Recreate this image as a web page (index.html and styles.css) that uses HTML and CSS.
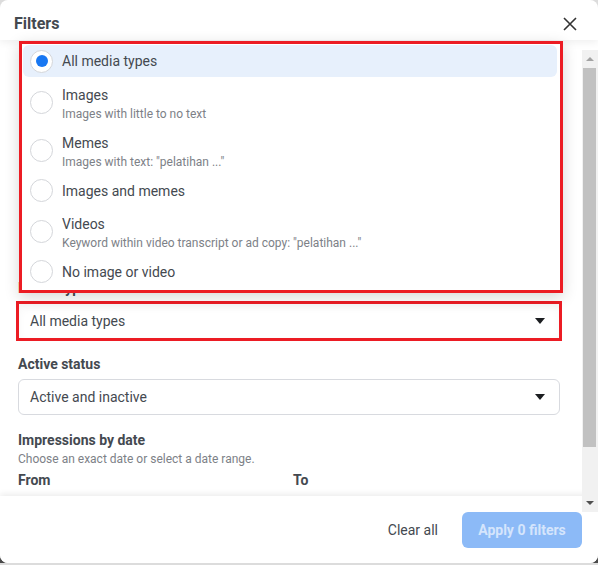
FILE: index.html
```html
<!DOCTYPE html>
<html lang="en">
<head>
    <meta charset="UTF-8">
    <meta name="viewport" content="width=device-width, initial-scale=1.0">
    <title>Filters</title>
    <link rel="stylesheet" href="styles.css">
</head>
<body>
    <div class="modal">
        <div class="modal-header">
            <h2>Filters</h2>
            <button class="close-button" aria-label="Close">
                <svg width="14" height="14" viewBox="0 0 14 14"><path d="M1 1 L13 13 M13 1 L1 13" stroke="#333" stroke-width="1.6" fill="none"/></svg>
            </button>
        </div>

        <div class="modal-body">
            <div class="field">
                <div class="field-label">Media type</div>
                <div class="select select-open"><span>All media types</span><svg class="caret" width="10" height="6" viewBox="0 0 10 6"><path d="M0 0 H10 L5 6 Z"/></svg></div>
            </div>
            <div class="field">
                <div class="field-label">Active status</div>
                <div class="select"><span>Active and inactive</span><svg class="caret" width="10" height="6" viewBox="0 0 10 6"><path d="M0 0 H10 L5 6 Z"/></svg></div>
            </div>
            <div class="field">
                <div class="field-label">Impressions by date</div>
                <div class="field-hint">Choose an exact date or select a date range.</div>
                <div class="date-row">
                    <div class="field-label">From</div>
                    <div class="field-label">To</div>
                </div>
            </div>
        </div>

        <div class="modal-footer">
            <button class="clear-button">Clear all</button>
            <button class="apply-button" disabled>Apply 0 filters</button>
        </div>

        <!-- media type menu, opened over the form -->
        <div class="menu">
            <div class="menu-item selected">
                <span class="radio"></span>
                <div class="item-text"><div class="item-title">All media types</div></div>
            </div>
            <div class="menu-item two-line">
                <span class="radio"></span>
                <div class="item-text">
                    <div class="item-title">Images</div>
                    <div class="item-sub">Images with little to no text</div>
                </div>
            </div>
            <div class="menu-item two-line">
                <span class="radio"></span>
                <div class="item-text">
                    <div class="item-title">Memes</div>
                    <div class="item-sub">Images with text: "pelatihan ..."</div>
                </div>
            </div>
            <div class="menu-item">
                <span class="radio"></span>
                <div class="item-text"><div class="item-title">Images and memes</div></div>
            </div>
            <div class="menu-item two-line">
                <span class="radio"></span>
                <div class="item-text">
                    <div class="item-title">Videos</div>
                    <div class="item-sub">Keyword within video transcript or ad copy: "pelatihan ..."</div>
                </div>
            </div>
            <div class="menu-item">
                <span class="radio"></span>
                <div class="item-text"><div class="item-title">No image or video</div></div>
            </div>
        </div>

        <div class="scrollbar">
            <div class="scroll-btn"><span class="arrow-up"></span></div>
            <div class="scroll-thumb"></div>
            <div class="scroll-space"></div>
            <div class="scroll-btn"><span class="arrow-down"></span></div>
        </div>
    </div>
</body>
</html>
```

FILE: styles.css
```css
body {
    font-family: Roboto, "Liberation Sans", Arial, sans-serif;
    background: linear-gradient(to bottom, #dcdcdc 0, #dcdcdc 540px, #4a4a4a 560px);
    margin: 0;
    padding: 0;
    color: #444950;
}
.modal {
    position: relative;
    width: 598px;
    height: 563px;
    background-color: #fff;
    border-radius: 8px;
    overflow: hidden;
    display: flex;
    flex-direction: column;
}
.modal-header {
    display: flex;
    align-items: center;
    padding: 14px 21px 6px 14px;
    height: 20px;
    box-shadow: 0 2px 8px rgba(0, 0, 0, 0.07);
    position: relative;
    z-index: 1;
}
.modal-header h2 {
    margin: 0;
    font-size: 16px;
    line-height: 20px;
    font-weight: 700;
    color: #444950;
}
.close-button {
    margin-left: auto;
    background: none;
    border: none;
    padding: 0;
    width: 14px;
    height: 14px;
    display: flex;
}
.modal-body {
    flex: 1;
    overflow: hidden;
    padding: 240px 38px 0 18px;
}
.field {
    margin-bottom: 17px;
}
.field-label {
    font-size: 14px;
    line-height: 16px;
    font-weight: 700;
    color: #444950;
}
.field-hint {
    font-size: 12px;
    line-height: 16px;
    color: #7d8187;
    margin-top: 3px;
}
.select {
    margin-top: 7px;
    height: 36px;
    box-sizing: border-box;
    border: 1px solid #d8dadf;
    border-radius: 6px;
    display: flex;
    align-items: center;
    padding: 0 14px 0 11px;
    font-size: 14px;
    color: #444950;
}
.select .caret {
    margin-left: auto;
    fill: #1c1e21;
}
.select-open {
    border-color: #9dbff2;
    border-left-color: #6fa0ec;
    border-radius: 0;
    box-shadow: inset 0 4px 8px rgba(0, 0, 0, 0.035);
    outline: 3px solid #ec1c24;
    outline-offset: -1px;
}
.date-row {
    display: grid;
    grid-template-columns: 1fr 1fr;
    gap: 8px;
    margin-top: 5px;
}
.modal-footer {
    height: 67px;
    flex-shrink: 0;
    display: flex;
    align-items: center;
    justify-content: flex-end;
    gap: 12px;
    padding-right: 16px;
    box-shadow: 0 -2px 6px rgba(0, 0, 0, 0.08);
    position: relative;
    background: #fff;
}
.clear-button {
    background: none;
    border: none;
    padding: 0 12px;
    font-family: inherit;
    font-size: 14px;
    color: #444950;
    height: 36px;
}
.apply-button {
    width: 120px;
    height: 36px;
    border: none;
    border-radius: 6px;
    background-color: #8cbaf7;
    color: #d5e5fc;
    font-family: inherit;
    font-size: 14px;
    font-weight: 700;
}
.menu {
    position: absolute;
    top: 41px;
    left: 19px;
    width: 544px;
    height: 252px;
    box-sizing: border-box;
    border: 3px solid #ec1c24;
    background: #fff;
    padding: 1px 3px 0 1px;
    box-shadow: 0 4px 14px rgba(0, 0, 0, 0.16);
    z-index: 2;
}
.menu-item {
    display: flex;
    align-items: center;
    gap: 9px;
    height: 33px;
    padding-left: 7px;
    border-radius: 6px;
}
.menu-item.two-line {
    height: 48px;
}
.two-line .item-text {
    padding-top: 3px;
}
.menu-item.selected {
    background-color: #e7f0fc;
    height: 32px;
    margin-bottom: 1px;
}
.radio {
    width: 23px;
    height: 23px;
    box-sizing: border-box;
    border: 1px solid #d4d6da;
    border-radius: 50%;
    background: #fff;
    flex-shrink: 0;
    display: flex;
    align-items: center;
    justify-content: center;
}
.selected .radio::after {
    content: "";
    width: 12px;
    height: 12px;
    border-radius: 50%;
    background-color: #1877f2;
}
.item-title {
    font-size: 14px;
    line-height: 18px;
    color: #444950;
}
.item-sub {
    font-size: 12px;
    line-height: 16px;
    color: #7d8187;
    margin-top: 2px;
}
.scrollbar {
    position: absolute;
    top: 50px;
    right: 0;
    width: 16px;
    height: 462px;
    background: #f1f1f1;
    display: flex;
    flex-direction: column;
    z-index: 3;
}
.scroll-btn {
    height: 18px;
    display: flex;
    align-items: center;
    justify-content: center;
}
.arrow-up {
    border-left: 4px solid transparent;
    border-right: 4px solid transparent;
    border-bottom: 4px solid #a3a3a3;
}
.arrow-down {
    border-left: 4px solid transparent;
    border-right: 4px solid transparent;
    border-top: 4px solid #505050;
}
.scroll-thumb {
    height: 379px;
    margin: 0 2px 0 1px;
    background: #c1c1c1;
}
.scroll-space {
    flex: 1;
}
```
